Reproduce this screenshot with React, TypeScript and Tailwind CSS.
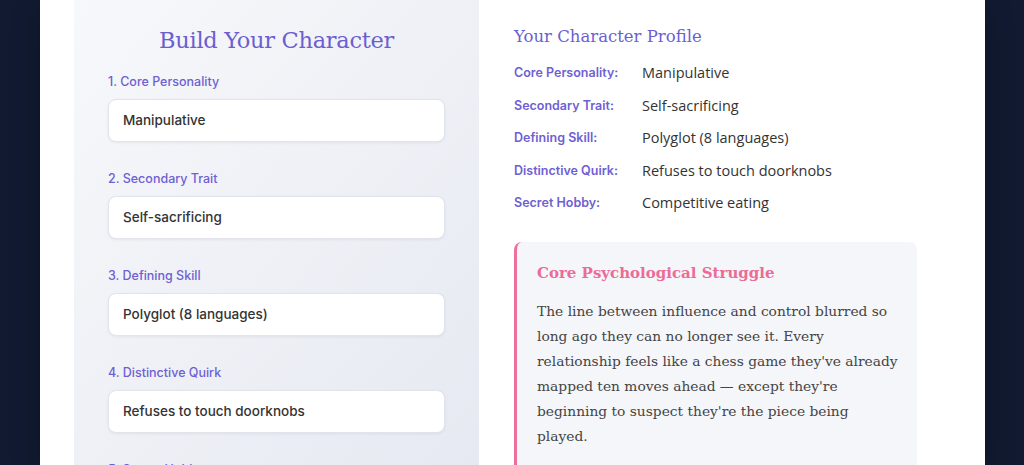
import React from "react";

const fields = [
  { label: "1. Core Personality", value: "Manipulative" },
  { label: "2. Secondary Trait", value: "Self-sacrificing" },
  { label: "3. Defining Skill", value: "Polyglot (8 languages)" },
  { label: "4. Distinctive Quirk", value: "Refuses to touch doorknobs" },
  { label: "5. Secret Hobby", value: "Competitive eating" },
];

const profile = [
  { k: "Core Personality:", v: "Manipulative" },
  { k: "Secondary Trait:", v: "Self-sacrificing" },
  { k: "Defining Skill:", v: "Polyglot (8 languages)" },
  { k: "Distinctive Quirk:", v: "Refuses to touch doorknobs" },
  { k: "Secret Hobby:", v: "Competitive eating" },
];

const serif = { fontFamily: '"DejaVu Serif", "Liberation Serif", serif' };

const lines = [
  "The line between influence and control blurred so",
  "long ago they can no longer see it. Every",
  "relationship feels like a chess game they've already",
  "mapped ten moves ahead — except they're",
  "beginning to suspect they're the piece being",
  "played.",
];

export default function App() {
  return (
    <div className="w-[1024px] h-[465px] overflow-hidden bg-[#111a30] pl-[40px] pr-[39px]">
      <div className="h-full bg-white flex px-[34px] shadow-[0_10px_30px_rgba(0,0,0,0.2)] [font-family:Inter,'Open_Sans',sans-serif]">
        <div className="w-[405px] shrink-0 bg-gradient-to-br from-[#f7f8fb] to-[#e6e9f1] px-[34px] pt-[22px]">
          <h2
            className="text-center text-[22.5px] leading-[36px] text-[#6b5fd0] mb-[14px] tracking-[-0.3px]"
            style={serif}
          >
            Build Your Character
          </h2>
          <div className="flex flex-col gap-[27px]">
            {fields.map((f) => (
              <div key={f.label}>
                <div className="text-[12.5px] leading-[20px] font-medium text-[#6e5fd3] mb-[7px]">
                  {f.label}
                </div>
                <div className="h-[43px] bg-white rounded-[8px] border border-[#e1e4ec] shadow-[0_1px_3px_rgba(0,0,0,0.06)] flex items-center px-[14px] text-[13.5px] font-medium text-[#333]">
                  {f.value}
                </div>
              </div>
            ))}
          </div>
        </div>
        <div className="flex-1 pl-[35px] pr-[34px] pt-[23px] bg-white">
          <h3 className="text-[16.5px] leading-[28px] text-[#6b5fd0] mb-[11px]" style={serif}>
            Your Character Profile
          </h3>
          <div className="flex flex-col gap-[10.5px]">
            {profile.map((p) => (
              <div key={p.k} className="flex leading-[22px]">
                <div className="w-[128px] shrink-0 text-[12.5px] font-semibold text-[#6e5fd3]">{p.k}</div>
                <div
                  className="text-[14.5px] text-[#333]"
                  style={{ fontFamily: '"Open Sans", sans-serif' }}
                >
                  {p.v}
                </div>
              </div>
            ))}
          </div>
          <div className="mt-[28px] bg-[#f4f6fa] rounded-[8px] border-l-[3px] border-[#ee6f9c] pl-[20px] pr-[16px] pt-[18px] pb-[24px]">
            <h4 className="text-[15px] leading-[26px] font-bold text-[#ec6c97] mb-[13px]" style={serif}>
              Core Psychological Struggle
            </h4>
            <p className="text-[13.8px] leading-[25px] text-[#444]" style={serif}>
              {lines.map((l, i) => (
                <span key={i} className="block whitespace-nowrap">
                  {l}
                </span>
              ))}
            </p>
          </div>
        </div>
      </div>
    </div>
  );
}
